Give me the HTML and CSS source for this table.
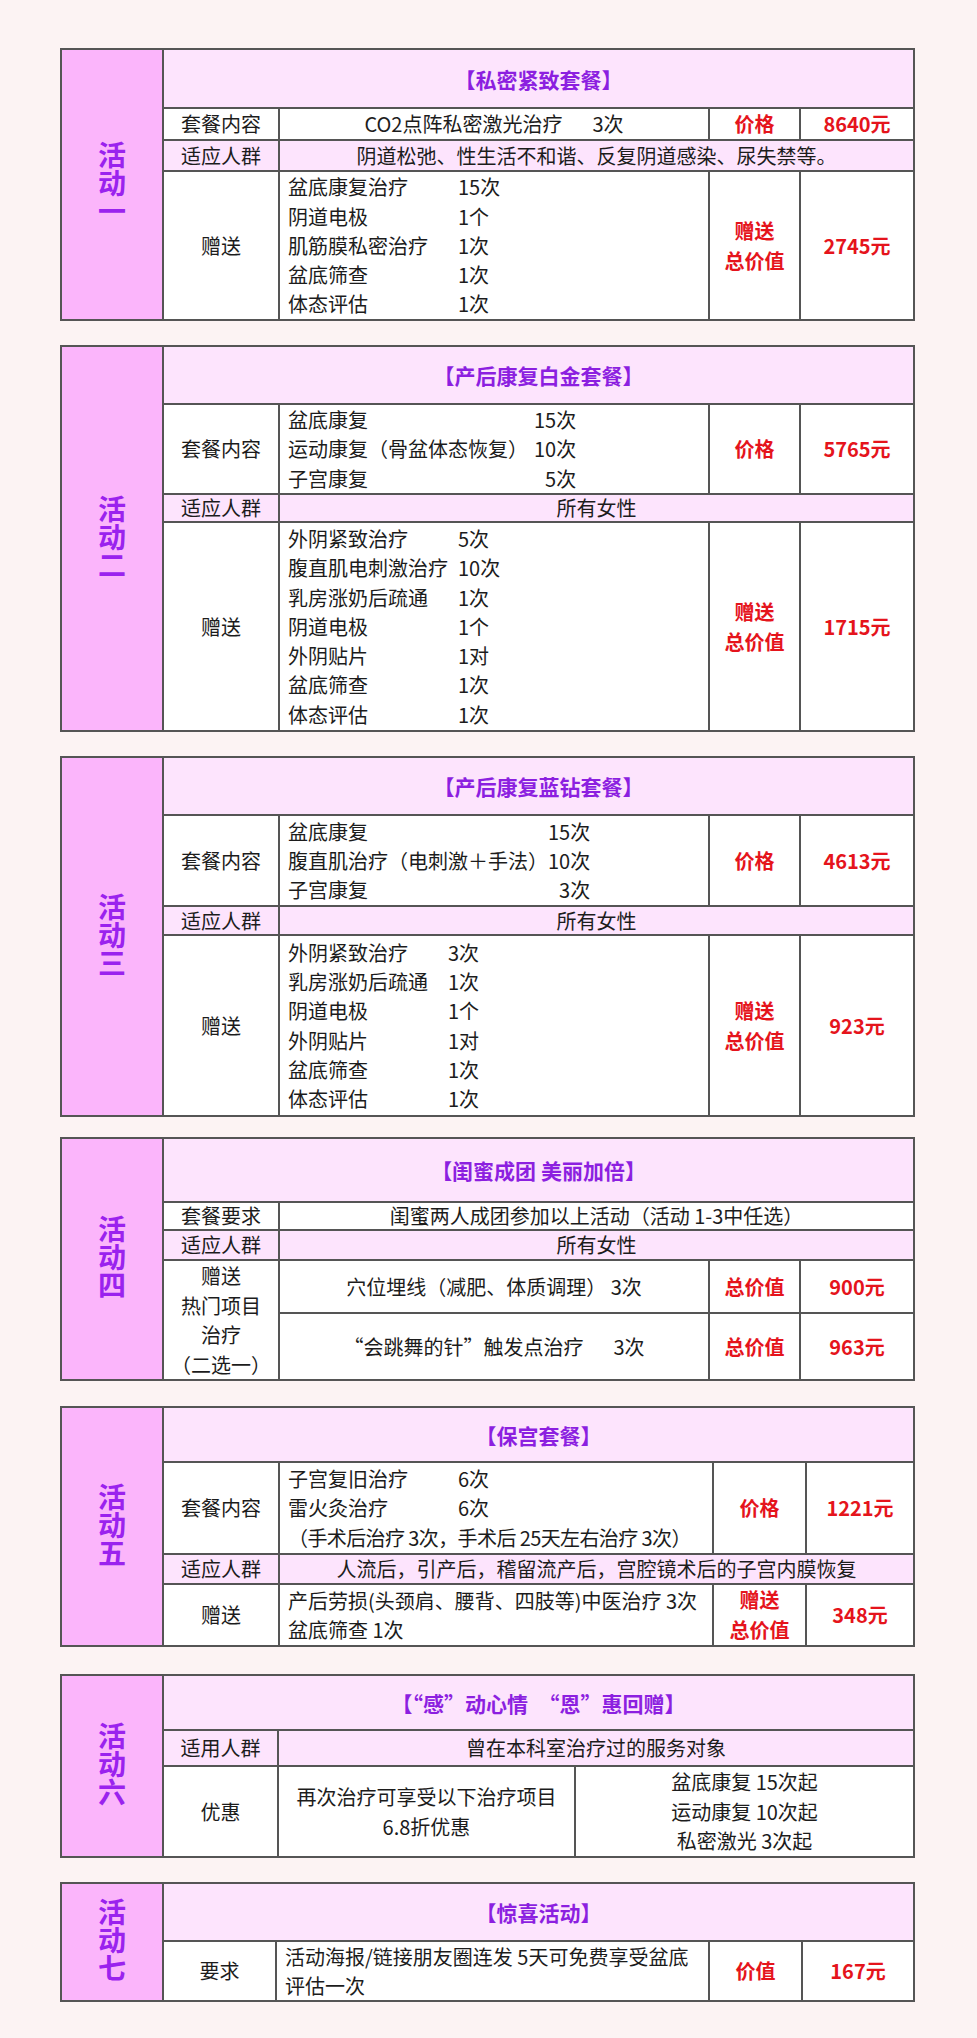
FILE: index.html
```html
<!DOCTYPE html>
<html lang="zh-CN">
<head>
<meta charset="utf-8">
<title>活动</title>
<link rel="stylesheet" href="styles.css">
</head>
<body>
<main class="page">

<table class="act">
  <colgroup><col class="c-label"><col class="c-key"><col class="c-main"><col class="c-tag"><col class="c-val"></colgroup>
  <tr class="h59"><th class="label" rowspan="4"><span class="vert">活动一</span></th><td class="title" colspan="4">【私密紧致套餐】</td></tr>
  <tr class="h30"><td>套餐内容</td><td>CO2点阵私密激光治疗<span class="sp"></span>3次</td><td class="red">价格</td><td class="red">8640元</td></tr>
  <tr class="h31 pink"><td>适应人群</td><td colspan="3">阴道松弛、性生活不和谐、反复阴道感染、尿失禁等。</td></tr>
  <tr class="h149"><td>赠送</td>
    <td><div class="list nw-164"><span>盆底康复治疗</span><span>15次</span><span>阴道电极</span><span>1个</span><span>肌筋膜私密治疗</span><span>1次</span><span>盆底筛查</span><span>1次</span><span>体态评估</span><span>1次</span></div></td>
    <td class="red">赠送<br>总价值</td><td class="red">2745元</td></tr>
</table>

<table class="act">
  <colgroup><col class="c-label"><col class="c-key"><col class="c-main"><col class="c-tag"><col class="c-val"></colgroup>
  <tr class="h58"><th class="label" rowspan="4"><span class="vert">活动二</span></th><td class="title" colspan="4">【产后康复白金套餐】</td></tr>
  <tr class="h90"><td>套餐内容</td>
    <td><div class="list list-r"><span>盆底康复</span><span>15次</span><span>运动康复（骨盆体态恢复）</span><span>10次</span><span>子宫康复</span><span>5次</span></div></td>
    <td class="red">价格</td><td class="red">5765元</td></tr>
  <tr class="h28 pink"><td>适应人群</td><td colspan="3">所有女性</td></tr>
  <tr class="h209"><td>赠送</td>
    <td><div class="list nw-164"><span>外阴紧致治疗</span><span>5次</span><span>腹直肌电刺激治疗</span><span>10次</span><span>乳房涨奶后疏通</span><span>1次</span><span>阴道电极</span><span>1个</span><span>外阴贴片</span><span>1对</span><span>盆底筛查</span><span>1次</span><span>体态评估</span><span>1次</span></div></td>
    <td class="red">赠送<br>总价值</td><td class="red">1715元</td></tr>
</table>

<table class="act">
  <colgroup><col class="c-label"><col class="c-key"><col class="c-main"><col class="c-tag"><col class="c-val"></colgroup>
  <tr class="h58"><th class="label" rowspan="4"><span class="vert">活动三</span></th><td class="title" colspan="4">【产后康复蓝钻套餐】</td></tr>
  <tr class="h91"><td>套餐内容</td>
    <td><div class="list list-r tight"><span>盆底康复</span><span>15次</span><span>腹直肌治疗（电刺激＋手法）</span><span>10次</span><span>子宫康复</span><span>3次</span></div></td>
    <td class="red">价格</td><td class="red">4613元</td></tr>
  <tr class="h29 pink"><td>适应人群</td><td colspan="3">所有女性</td></tr>
  <tr class="h181"><td>赠送</td>
    <td><div class="list nw-154"><span>外阴紧致治疗</span><span>3次</span><span>乳房涨奶后疏通</span><span>1次</span><span>阴道电极</span><span>1个</span><span>外阴贴片</span><span>1对</span><span>盆底筛查</span><span>1次</span><span>体态评估</span><span>1次</span></div></td>
    <td class="red">赠送<br>总价值</td><td class="red">923元</td></tr>
</table>

<table class="act gap-20">
  <colgroup><col class="c-label"><col class="c-key"><col class="c-main"><col class="c-tag"><col class="c-val"></colgroup>
  <tr class="h64"><th class="label" rowspan="5"><span class="vert">活动四</span></th><td class="title" colspan="4">【闺蜜成团&nbsp;美丽加倍】</td></tr>
  <tr class="h28"><td>套餐要求</td><td colspan="3">闺蜜两人成团参加以上活动（活动 1-3中任选）</td></tr>
  <tr class="h30 pink"><td>适应人群</td><td colspan="3">所有女性</td></tr>
  <tr class="h53"><td rowspan="2" class="stack">赠送<br>热门项目<br>治疗<br>（二选一）</td><td>穴位埋线（减肥、体质调理） 3次</td><td class="red">总价值</td><td class="red">900元</td></tr>
  <tr class="h67"><td>“会跳舞的针”触发点治疗<span class="sp"></span>3次</td><td class="red">总价值</td><td class="red">963元</td></tr>
</table>

<table class="act gap-25">
  <colgroup><col class="c-label"><col class="c-key"><col class="c-main5"><col class="c-tag5"><col class="c-val5"></colgroup>
  <tr class="h55"><th class="label" rowspan="4"><span class="vert">活动五</span></th><td class="title" colspan="4">【保宫套餐】</td></tr>
  <tr class="h92"><td>套餐内容</td>
    <td><div class="list nw-164"><span>子宫复旧治疗</span><span>6次</span><span>雷火灸治疗</span><span>6次</span><span class="full">（手术后治疗 3次，手术后 25天左右治疗 3次）</span></div></td>
    <td class="red">价格</td><td class="red">1221元</td></tr>
  <tr class="h30 pink"><td>适应人群</td><td colspan="3">人流后，引产后，稽留流产后，宫腔镜术后的子宫内膜恢复</td></tr>
  <tr class="h61"><td>赠送</td><td class="left">产后劳损(头颈肩、腰背、四肢等)中医治疗 3次<br>盆底筛查 1次</td><td class="red">赠送<br>总价值</td><td class="red">348元</td></tr>
</table>

<table class="act gap-27">
  <colgroup><col class="c-label"><col class="c-key6"><col class="c-main6"><col class="c-rest6"></colgroup>
  <tr class="h55"><th class="label" rowspan="3"><span class="vert">活动六</span></th><td class="title" colspan="3">【“感”动心情　“恩”惠回赠】</td></tr>
  <tr class="h36 pink"><td>适用人群</td><td colspan="2">曾在本科室治疗过的服务对象</td></tr>
  <tr class="h91"><td>优惠</td><td class="multi">再次治疗可享受以下治疗项目<br>6.8折优惠</td><td class="multi">盆底康复 15次起<br>运动康复 10次起<br>私密激光 3次起</td></tr>
</table>

<table class="act">
  <colgroup><col class="c-label"><col class="c-key7"><col class="c-main7"><col class="c-tag7"><col class="c-val7"></colgroup>
  <tr class="h58"><th class="label" rowspan="2"><span class="vert">活动七</span></th><td class="title" colspan="4">【惊喜活动】</td></tr>
  <tr class="h60"><td>要求</td><td class="left">活动海报/链接朋友圈连发 5天可免费享受盆底<br>评估一次</td><td class="red">价值</td><td class="red">167元</td></tr>
</table>

</main>
</body>
</html>
```
FILE: styles.css
```css
body {
  margin: 0;
  background: #fcf3f3;
  font-family: "Noto Sans CJK SC", "Noto Sans", sans-serif;
  color: #1c1c1c;
}

.page {
  display: flex;
  flex-direction: column;
  padding: 48px 0 40px 60px;
}

.act {
  border-collapse: separate;
  border-spacing: 0;
  table-layout: fixed;
  width: 855px;
  border-top: 2px solid #555;
  border-left: 2px solid #555;
  font-size: 20px;
  line-height: 24px;
}

.act + .act { margin-top: 24px; }
.act.gap-20 { margin-top: 20px; }
.act.gap-25 { margin-top: 25px; }
.act.gap-27 { margin-top: 27px; }

.act td,
.act th {
  box-sizing: border-box;
  border: 0;
  border-right: 2px solid #555;
  border-bottom: 2px solid #555;
  padding: 0 8px;
  vertical-align: middle;
  text-align: center;
  background: #fff;
  font-weight: 400;
}

.c-label { width: 102px; }
.c-key { width: 116px; }
.c-main { width: 430px; }
.c-tag { width: 91px; }
.c-val { width: 114px; }

.c-main5 { width: 434px; }
.c-tag5 { width: 93px; }
.c-val5 { width: 108px; }

.c-key6 { width: 115px; }
.c-main6 { width: 297px; }
.c-rest6 { width: 339px; }

.c-key7 { width: 113px; }
.c-main7 { width: 433px; }
.c-tag7 { width: 93px; }
.c-val7 { width: 112px; }

.act th.label {
  background: #fbb5fb;
  padding: 0;
}

.vert {
  display: inline-block;
  writing-mode: vertical-rl;
  font-size: 28px;
  line-height: 28px;
  font-weight: 700;
  color: #9a22ee;
}

.act td.title {
  background: #fde4fd;
  color: #8c1fe0;
  font-weight: 700;
  font-size: 21px;
}

.act .pink td {
  background: #fde4fd;
}

.act td.red {
  color: #e5141c;
  font-weight: 700;
  line-height: 30px;
}

.act td.left {
  text-align: left;
  line-height: 29px;
}

.act td.multi {
  line-height: 29.5px;
}

.act td.stack {
  padding: 0;
  line-height: 29.5px;
}

.sp {
  display: inline-block;
  width: 30px;
}

.list {
  display: grid;
  grid-template-columns: minmax(var(--nw, 0px), max-content) max-content;
  column-gap: 6px;
  text-align: left;
  line-height: 29.3px;
}

.nw-164 { --nw: 164px; }
.nw-154 { --nw: 154px; }

.list-r > span:nth-child(2n) {
  justify-self: end;
}

.tight {
  column-gap: 0;
}

.list .full {
  grid-column: 1 / -1;
  white-space: nowrap;
  letter-spacing: -0.6px;
}

.h28 { height: 28px; }
.h29 { height: 29px; }
.h30 { height: 30px; }
.h31 { height: 31px; }
.h36 { height: 36px; }
.h53 { height: 53px; }
.h55 { height: 55px; }
.h58 { height: 58px; }
.h59 { height: 59px; }
.h60 { height: 60px; }
.h61 { height: 61px; }
.h64 { height: 64px; }
.h67 { height: 67px; }
.h90 { height: 90px; }
.h91 { height: 91px; }
.h92 { height: 92px; }
.h149 { height: 149px; }
.h181 { height: 181px; }
.h209 { height: 209px; }
```
